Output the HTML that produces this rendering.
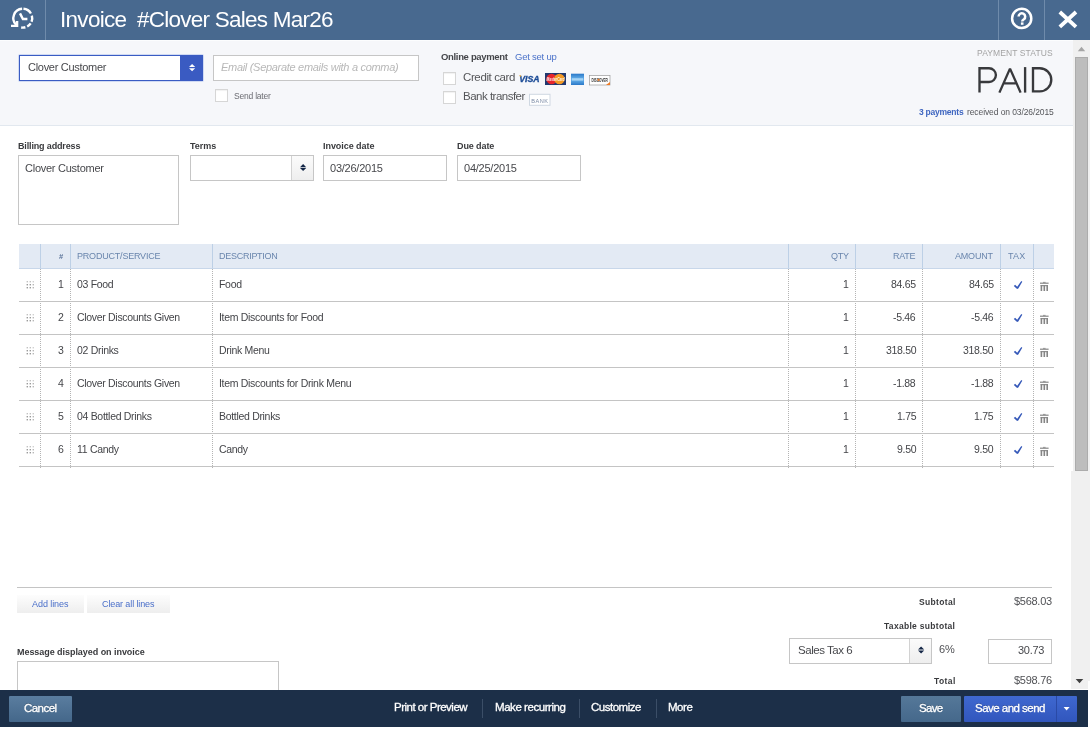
<!DOCTYPE html>
<html><head><meta charset="utf-8">
<style>
*{box-sizing:border-box;margin:0;padding:0}
html,body{width:1090px;height:746px;overflow:hidden;background:#fff;font-family:"Liberation Sans",sans-serif;color:#393a3d}
.a{position:absolute}
.tx{position:absolute;white-space:nowrap;will-change:transform}
.bx{position:absolute;background:#fff;border:1px solid #c6c6c6}
.cb{position:absolute;width:13px;height:13px;background:#fff;border:1px solid #d6d6d6;box-shadow:inset 0 1px 1px rgba(0,0,0,.06)}
.hs{position:absolute;top:244px;width:1px;height:24px;background:#bdd0e6}
.ds{position:absolute;top:269px;width:1px;height:200px;background:repeating-linear-gradient(to bottom,#b4b4b4 0,#b4b4b4 1px,transparent 1px,transparent 2px)}
.rb{position:absolute;left:19px;width:1035px;height:1px;background:#c4c4c4}
.btn{position:absolute;border-radius:1px}
.bsep{position:absolute;top:699px;width:1px;height:19px;background:#3b4e67}
</style></head><body>
<!-- header -->
<div class="a" style="left:0;top:0;width:1090px;height:40px;background:#48698f"></div>
<div class="a" style="left:45px;top:0;width:1px;height:40px;background:#6f8bab"></div>
<div class="a" style="left:998px;top:0;width:1px;height:40px;background:#6f8bab"></div>
<div class="a" style="left:1044px;top:0;width:1px;height:40px;background:#6f8bab"></div>
<svg class="a" style="left:0;top:0" width="1090" height="40">
  <g fill="none" stroke="#fff" stroke-width="2.4">
    <path d="M16.15 24.85A9.4 9.4 0 0 1 22.14 8.82"/>
    <path d="M23.46 8.82A9.4 9.4 0 0 1 30.94 13.50"/>
    <path d="M31.84 15.61A9.4 9.4 0 0 1 31.52 21.72"/>
    <path d="M30.68 23.32A9.4 9.4 0 0 1 27.21 26.50"/>
    <path d="M25.39 27.24A9.4 9.4 0 0 1 21.17 27.46"/>
    <path d="M11 25.9H17.1V20.9"/>
    <path d="M20 13.4L22.9 19H27.4"/>
    <circle cx="1021.7" cy="18.4" r="9.6" stroke-width="2.5"/>
  </g>
  <path d="M1059.8 12L1076 26.8M1076 12L1059.8 26.8" stroke="#fff" stroke-width="3.8" fill="none"/>
  <path d="M1018.6 16.6A3.3 3.3 0 1 1 1023.9 19.2C1022.6 20 1022.2 20.4 1022.2 21.6" fill="none" stroke="#fff" stroke-width="2.5"/><rect x="1020.9" y="22.4" width="2.6" height="2.4" fill="#fff"/>
</svg>

<!-- top section -->
<div class="a" style="left:0;top:40px;width:1073px;height:85px;background:#f6f7fa;border-top:1px solid #fcfdfe"></div>
<div class="a" style="left:0;top:125px;width:1073px;height:1px;background:#e2e8ef"></div>

<!-- customer select -->
<div class="a" style="left:18px;top:54px;width:186px;height:28px;border-radius:2px;background:#d0daf3"></div>
<div class="a" style="left:19px;top:55px;width:184px;height:26px;background:#fff;border:1px solid #3a5cc3"></div>
<div class="a" style="left:180px;top:55px;width:23px;height:26px;background:#3a5bc2"></div>
<svg class="a" style="left:180px;top:55px" width="23" height="26"><path d="M9 11.9L12.1 8.9L15.2 11.9ZM9 13.3L12.1 16.2L15.2 13.3Z" fill="#fff"/></svg>

<div class="bx" style="left:213px;top:55px;width:206px;height:26px"></div>
<div class="cb" style="left:215px;top:89px"></div>

<div class="cb" style="left:443px;top:72px"></div>
<div class="cb" style="left:443px;top:91px"></div>

<!-- card logos -->
<svg class="a" style="left:515px;top:70px;will-change:transform" width="100" height="40">
  <defs><linearGradient id="amx" x1="0" y1="0" x2="0" y2="1"><stop offset="0" stop-color="#2a78c8"/><stop offset=".5" stop-color="#6bb6ee"/><stop offset="1" stop-color="#2a78c8"/></linearGradient></defs>
  <text x="4.2" y="11.8" font-family="Liberation Sans" font-weight="bold" font-style="italic" font-size="9.5" fill="#1b4b96" stroke="#1b4b96" stroke-width=".35" textLength="20.5" lengthAdjust="spacingAndGlyphs">VISA</text>
  <path d="M4 5.2L6.2 5.6L5.6 7Z" fill="#f2a51c"/>
  <rect x="30" y="3" width="21" height="12" fill="#21386f"/>
  <circle cx="36.6" cy="9" r="5.3" fill="#e6252c"/>
  <circle cx="44.4" cy="9" r="5.3" fill="#f39a24"/>
  <text x="31.6" y="10.6" font-family="Liberation Sans" font-weight="bold" font-style="italic" font-size="4.6" fill="#fff" textLength="18" lengthAdjust="spacingAndGlyphs" opacity=".9">MasterCard</text>
  <rect x="56" y="3.7" width="13" height="11.3" fill="url(#amx)"/>
  <rect x="57" y="8.2" width="11" height="2.4" fill="#d8eefc" opacity=".55"/>
  <rect x="74.5" y="5.5" width="20.5" height="9.5" fill="#fff" stroke="#9a9a9a" stroke-width=".7"/>
  <text x="76.4" y="11.6" font-family="Liberation Sans" font-weight="bold" font-size="4.6" fill="#333" textLength="16.5" lengthAdjust="spacingAndGlyphs">DISCOVER</text>
  <circle cx="83.6" cy="9.9" r="1.1" fill="#f07a22"/>
    <path d="M95 12L95 15L91 15Z" fill="#f07a22"/>
  <rect x="14.5" y="24.3" width="20.5" height="11" fill="#fff" stroke="#cfd8e2" stroke-width="1"/>
  <text x="24.8" y="33" font-family="Liberation Sans" font-size="5.6" fill="#7d8ca6" text-anchor="middle" letter-spacing=".5">BANK</text>
</svg>

<!-- PAID -->
<svg class="a" style="left:960px;top:60px" width="100" height="40">
  <g fill="none" stroke="#38393c" stroke-width="2.35" stroke-linejoin="miter">
    <path d="M19.5 32.6V8.2H29A6.9 6.9 0 0 1 29 22H19.5"/>
    <path d="M39.4 32.6L50 8.6L60.6 32.6M43.6 23.4H56.4" stroke-linejoin="bevel"/>
    <path d="M65.1 7.1V32.6"/>
    <path d="M73 32.6V8.2H79.7A11.6 11.6 0 0 1 79.7 31.4H73"/>
  </g>
</svg>
<!-- scrollbar -->
<div class="a" style="left:1073px;top:40px;width:17px;height:641px;background:#f0f0f0"></div>
<div class="a" style="left:1071px;top:471px;width:17px;height:218px;background:#f0f0f0"></div>
<svg class="a" style="left:1070px;top:40px" width="20" height="650">
  <path d="M7.8 11.2L11.5 6.8L15.2 11.2Z" fill="#a5a5a5"/>
  <path d="M5.7 639L9.5 643.3L13.3 639Z" fill="#404040"/>
</svg>
<div class="a" style="left:1075px;top:57px;width:13px;height:414px;background:#bdbdbd;border:1px solid #acacac"></div>

<!-- billing -->
<div class="bx" style="left:18px;top:155px;width:161px;height:70px"></div>
<div class="bx" style="left:190px;top:155px;width:124px;height:26px"></div>
<div class="a" style="left:291px;top:156px;width:22px;height:24px;background:linear-gradient(#fbfbfb,#eeeeee);border-left:1px solid #d2d2d2"></div>
<svg class="a" style="left:291px;top:155px" width="23" height="26"><path d="M9 12.2L12.1 9L15.2 12.2ZM9 13L12.1 15.9L15.2 13Z" fill="#132646"/></svg>
<div class="bx" style="left:323px;top:155px;width:124px;height:26px"></div>
<div class="bx" style="left:457px;top:155px;width:124px;height:26px"></div>

<!-- table -->
<div class="a" style="left:19px;top:244px;width:1035px;height:25px;background:#e3eaf4;border-bottom:1px solid #c8d7ea"></div>
<div class="hs" style="left:40px"></div>
<div class="hs" style="left:70px"></div>
<div class="hs" style="left:212px"></div>
<div class="hs" style="left:788px"></div>
<div class="hs" style="left:855px"></div>
<div class="hs" style="left:922px"></div>
<div class="hs" style="left:1000px"></div>
<div class="hs" style="left:1033px"></div>
<div class="ds" style="left:40px"></div>
<div class="ds" style="left:70px"></div>
<div class="ds" style="left:212px"></div>
<div class="ds" style="left:788px"></div>
<div class="ds" style="left:855px"></div>
<div class="ds" style="left:922px"></div>
<div class="ds" style="left:1000px"></div>
<div class="ds" style="left:1033px"></div>
<div class="rb" style="top:301px"></div>
<div class="rb" style="top:334px"></div>
<div class="rb" style="top:367px"></div>
<div class="rb" style="top:400px"></div>
<div class="rb" style="top:433px"></div>
<div class="rb" style="top:466px"></div>
<svg class="a" style="left:0;top:268px" width="1073" height="200">
  <defs>
    <g id="dh" fill="#9a9a9a">
      <rect x="26.6" y="0" width="1.4" height="1.4" opacity=".6"/><rect x="29.6" y="0" width="1.4" height="1.4" opacity=".6"/><rect x="32.6" y="0" width="1.4" height="1.4" opacity=".45"/>
      <rect x="26.6" y="3" width="1.4" height="1.4"/><rect x="29.6" y="3" width="1.4" height="1.4"/><rect x="32.6" y="3" width="1.4" height="1.4" opacity=".7"/>
      <rect x="26.6" y="6" width="1.4" height="1.4"/><rect x="29.6" y="6" width="1.4" height="1.4"/><rect x="32.6" y="6" width="1.4" height="1.4" opacity=".7"/>
    </g>
    <path id="ck" d="M1013.8 286.1L1015.1 284.8L1017.2 286.8L1021.3 280.9L1022.3 281.7L1018.3 288.5L1017.1 289.1Z" fill="#3659b9"/>
    <g id="tr" fill="#858585">
      <rect x="1040" y="282.6" width="8.6" height="1.2"/>
      <rect x="1043" y="281.9" width="2.6" height="0.8"/>
      <rect x="1040.6" y="285.1" width="1.6" height="5.9"/>
      <rect x="1043.5" y="285.1" width="1.6" height="5.9"/>
      <rect x="1046.4" y="285.1" width="1.6" height="5.9"/>
      <rect x="1040.6" y="285.1" width="7.4" height="1.1"/>
    </g>
  </defs>
  <use href="#dh" y="13"/><use href="#ck" y="0" transform="translate(0,-268)"/><use href="#tr" transform="translate(0,-268)"/>
  <use href="#dh" y="46"/><use href="#ck" transform="translate(0,-235)"/><use href="#tr" transform="translate(0,-235)"/>
  <use href="#dh" y="79"/><use href="#ck" transform="translate(0,-202)"/><use href="#tr" transform="translate(0,-202)"/>
  <use href="#dh" y="112"/><use href="#ck" transform="translate(0,-169)"/><use href="#tr" transform="translate(0,-169)"/>
  <use href="#dh" y="145"/><use href="#ck" transform="translate(0,-136)"/><use href="#tr" transform="translate(0,-136)"/>
  <use href="#dh" y="178"/><use href="#ck" transform="translate(0,-103)"/><use href="#tr" transform="translate(0,-103)"/>
</svg>

<!-- bottom of table -->
<div class="a" style="left:17px;top:587px;width:1035px;height:1px;background:#c4c4c4"></div>
<div class="btn" style="left:17px;top:595px;width:67px;height:18px;background:linear-gradient(#fdfdfd,#eeeeee);border-radius:0"></div>
<div class="btn" style="left:87px;top:595px;width:83px;height:18px;background:linear-gradient(#fdfdfd,#eeeeee);border-radius:0"></div>

<div class="bx" style="left:789px;top:638px;width:143px;height:26px"></div>
<div class="a" style="left:909px;top:639px;width:22px;height:24px;background:linear-gradient(#fbfbfb,#eeeeee);border-left:1px solid #d2d2d2"></div>
<svg class="a" style="left:910px;top:638px" width="22" height="25"><path d="M8 11.6L11.1 8.5L14.2 11.6ZM8 12.5L11.1 15.5L14.2 12.5Z" fill="#132646"/></svg>
<div class="bx" style="left:988px;top:639px;width:64px;height:25px"></div>

<div class="bx" style="left:17px;top:661px;width:262px;height:40px"></div>

<!-- bottom bar -->
<div class="a" style="left:0;top:690px;width:1088px;height:37px;background:#1c2f48"></div>
<div class="btn" style="left:9px;top:696px;width:63px;height:26px;background:linear-gradient(#5a7d9f,#44678a)"></div>
<div class="bsep" style="left:482px"></div>
<div class="bsep" style="left:579px"></div>
<div class="bsep" style="left:656px"></div>
<div class="btn" style="left:901px;top:696px;width:60px;height:26px;background:linear-gradient(#557899,#45688b)"></div>
<div class="btn" style="left:964px;top:696px;width:113px;height:26px;background:linear-gradient(#3f68d0,#3156bd)"></div>
<div class="a" style="left:1056px;top:696px;width:1px;height:26px;background:#2a4aa6"></div>
<svg class="a" style="left:1056px;top:696px" width="21" height="26"><path d="M7.6 11L10.6 14.6L13.6 11Z" fill="#fff"/></svg>

<div class="tx" style="left:59.70px;top:8.55px;font-size:22.5px;line-height:22.5px;color:#fff;font-weight:normal;font-style:normal;letter-spacing:-0.696px;">Invoice</div>
<div class="tx" style="left:136.70px;top:8.55px;font-size:22.5px;line-height:22.5px;color:#fff;font-weight:normal;font-style:normal;letter-spacing:-0.754px;">#Clover Sales Mar26</div>
<div class="tx" style="left:27.60px;top:62.49px;font-size:11px;line-height:11px;color:#47484c;font-weight:normal;font-style:normal;letter-spacing:-0.290px;">Clover Customer</div>
<div class="tx" style="left:221.00px;top:62.49px;font-size:11px;line-height:11px;color:#b8b8b8;font-weight:normal;font-style:italic;letter-spacing:-0.303px;">Email (Separate emails with a comma)</div>
<div class="tx" style="left:234.00px;top:91.50px;font-size:8.5px;line-height:8.5px;color:#6b6c72;font-weight:normal;font-style:normal;letter-spacing:-0.213px;">Send later</div>
<div class="tx" style="left:441.30px;top:52.26px;font-size:9.5px;line-height:9.5px;color:#45464a;font-weight:bold;font-style:normal;letter-spacing:-0.331px;">Online payment</div>
<div class="tx" style="left:514.90px;top:52.26px;font-size:9.5px;line-height:9.5px;color:#4b72c9;font-weight:normal;font-style:normal;letter-spacing:-0.227px;">Get set up</div>
<div class="tx" style="left:463.00px;top:72.06px;font-size:11.5px;line-height:11.5px;color:#555659;font-weight:normal;font-style:normal;letter-spacing:-0.385px;">Credit card</div>
<div class="tx" style="left:463.00px;top:91.06px;font-size:11.5px;line-height:11.5px;color:#555659;font-weight:normal;font-style:normal;letter-spacing:-0.505px;">Bank transfer</div>
<div class="tx" style="left:977.20px;top:49.20px;font-size:8.5px;line-height:8.5px;color:#a3a3a3;font-weight:normal;font-style:normal;letter-spacing:0.101px;">PAYMENT STATUS</div>
<div class="tx" style="left:918.50px;top:108.20px;font-size:8.5px;line-height:8.5px;color:#3f66c0;font-weight:bold;font-style:normal;letter-spacing:-0.238px;">3 payments</div>
<div class="tx" style="left:967.30px;top:108.20px;font-size:8.5px;line-height:8.5px;color:#55565a;font-weight:normal;font-style:normal;letter-spacing:-0.096px;">received on 03/26/2015</div>
<div class="tx" style="left:18.00px;top:142.18px;font-size:9px;line-height:9px;color:#393a3d;font-weight:bold;font-style:normal;letter-spacing:-0.151px;">Billing address</div>
<div class="tx" style="left:25.20px;top:163.19px;font-size:11px;line-height:11px;color:#47484c;font-weight:normal;font-style:normal;letter-spacing:-0.254px;">Clover Customer</div>
<div class="tx" style="left:189.90px;top:142.48px;font-size:9px;line-height:9px;color:#393a3d;font-weight:bold;font-style:normal;letter-spacing:-0.035px;">Terms</div>
<div class="tx" style="left:322.90px;top:142.48px;font-size:9px;line-height:9px;color:#393a3d;font-weight:bold;font-style:normal;letter-spacing:-0.056px;">Invoice date</div>
<div class="tx" style="left:457.10px;top:142.48px;font-size:9px;line-height:9px;color:#393a3d;font-weight:bold;font-style:normal;letter-spacing:-0.100px;">Due date</div>
<div class="tx" style="left:330.00px;top:163.19px;font-size:11px;line-height:11px;color:#47484c;font-weight:normal;font-style:normal;letter-spacing:-0.237px;">03/26/2015</div>
<div class="tx" style="left:464.40px;top:163.19px;font-size:11px;line-height:11px;color:#47484c;font-weight:normal;font-style:normal;letter-spacing:-0.237px;">04/25/2015</div>
<div class="tx" style="left:58.60px;top:253.05px;font-size:7.5px;line-height:7.5px;color:#5a7399;font-weight:bold;font-style:normal;letter-spacing:0.000px;">#</div>
<div class="tx" style="left:76.80px;top:252.48px;font-size:9px;line-height:9px;color:#6a86ad;font-weight:normal;font-style:normal;letter-spacing:-0.203px;">PRODUCT/SERVICE</div>
<div class="tx" style="left:218.80px;top:252.48px;font-size:9px;line-height:9px;color:#6a86ad;font-weight:normal;font-style:normal;letter-spacing:-0.271px;">DESCRIPTION</div>
<div class="tx" style="left:830.80px;top:252.48px;font-size:9px;line-height:9px;color:#6a86ad;font-weight:normal;font-style:normal;letter-spacing:-0.249px;">QTY</div>
<div class="tx" style="left:893.00px;top:252.48px;font-size:9px;line-height:9px;color:#6a86ad;font-weight:normal;font-style:normal;letter-spacing:-0.244px;">RATE</div>
<div class="tx" style="left:955.20px;top:252.48px;font-size:9px;line-height:9px;color:#6a86ad;font-weight:normal;font-style:normal;letter-spacing:-0.200px;">AMOUNT</div>
<div class="tx" style="left:1008.10px;top:252.48px;font-size:9px;line-height:9px;color:#6a86ad;font-weight:normal;font-style:normal;letter-spacing:0.184px;">TAX</div>
<div class="tx" style="left:58.10px;top:278.81px;font-size:10.5px;line-height:10.5px;color:#444549;font-weight:normal;font-style:normal;letter-spacing:-0.310px;">1</div>
<div class="tx" style="left:76.80px;top:278.81px;font-size:10.5px;line-height:10.5px;color:#444549;font-weight:normal;font-style:normal;letter-spacing:-0.310px;">03 Food</div>
<div class="tx" style="left:219.00px;top:278.81px;font-size:10.5px;line-height:10.5px;color:#444549;font-weight:normal;font-style:normal;letter-spacing:-0.310px;">Food</div>
<div class="tx" style="left:842.50px;top:278.81px;font-size:10.5px;line-height:10.5px;color:#444549;font-weight:normal;font-style:normal;letter-spacing:-0.310px;">1</div>
<div class="tx" style="left:891.10px;top:278.81px;font-size:10.5px;line-height:10.5px;color:#444549;font-weight:normal;font-style:normal;letter-spacing:-0.310px;">84.65</div>
<div class="tx" style="left:968.70px;top:278.81px;font-size:10.5px;line-height:10.5px;color:#444549;font-weight:normal;font-style:normal;letter-spacing:-0.310px;">84.65</div>
<div class="tx" style="left:58.10px;top:311.81px;font-size:10.5px;line-height:10.5px;color:#444549;font-weight:normal;font-style:normal;letter-spacing:-0.310px;">2</div>
<div class="tx" style="left:76.80px;top:311.81px;font-size:10.5px;line-height:10.5px;color:#444549;font-weight:normal;font-style:normal;letter-spacing:-0.310px;">Clover Discounts Given</div>
<div class="tx" style="left:219.00px;top:311.81px;font-size:10.5px;line-height:10.5px;color:#444549;font-weight:normal;font-style:normal;letter-spacing:-0.310px;">Item Discounts for Food</div>
<div class="tx" style="left:842.50px;top:311.81px;font-size:10.5px;line-height:10.5px;color:#444549;font-weight:normal;font-style:normal;letter-spacing:-0.310px;">1</div>
<div class="tx" style="left:893.45px;top:311.81px;font-size:10.5px;line-height:10.5px;color:#444549;font-weight:normal;font-style:normal;letter-spacing:-0.310px;">-5.46</div>
<div class="tx" style="left:971.05px;top:311.81px;font-size:10.5px;line-height:10.5px;color:#444549;font-weight:normal;font-style:normal;letter-spacing:-0.310px;">-5.46</div>
<div class="tx" style="left:58.10px;top:344.81px;font-size:10.5px;line-height:10.5px;color:#444549;font-weight:normal;font-style:normal;letter-spacing:-0.310px;">3</div>
<div class="tx" style="left:76.80px;top:344.81px;font-size:10.5px;line-height:10.5px;color:#444549;font-weight:normal;font-style:normal;letter-spacing:-0.310px;">02 Drinks</div>
<div class="tx" style="left:219.00px;top:344.81px;font-size:10.5px;line-height:10.5px;color:#444549;font-weight:normal;font-style:normal;letter-spacing:-0.310px;">Drink Menu</div>
<div class="tx" style="left:842.50px;top:344.81px;font-size:10.5px;line-height:10.5px;color:#444549;font-weight:normal;font-style:normal;letter-spacing:-0.310px;">1</div>
<div class="tx" style="left:885.57px;top:344.81px;font-size:10.5px;line-height:10.5px;color:#444549;font-weight:normal;font-style:normal;letter-spacing:-0.310px;">318.50</div>
<div class="tx" style="left:963.17px;top:344.81px;font-size:10.5px;line-height:10.5px;color:#444549;font-weight:normal;font-style:normal;letter-spacing:-0.310px;">318.50</div>
<div class="tx" style="left:58.10px;top:377.81px;font-size:10.5px;line-height:10.5px;color:#444549;font-weight:normal;font-style:normal;letter-spacing:-0.310px;">4</div>
<div class="tx" style="left:76.80px;top:377.81px;font-size:10.5px;line-height:10.5px;color:#444549;font-weight:normal;font-style:normal;letter-spacing:-0.310px;">Clover Discounts Given</div>
<div class="tx" style="left:219.00px;top:377.81px;font-size:10.5px;line-height:10.5px;color:#444549;font-weight:normal;font-style:normal;letter-spacing:-0.310px;">Item Discounts for Drink Menu</div>
<div class="tx" style="left:842.50px;top:377.81px;font-size:10.5px;line-height:10.5px;color:#444549;font-weight:normal;font-style:normal;letter-spacing:-0.310px;">1</div>
<div class="tx" style="left:893.45px;top:377.81px;font-size:10.5px;line-height:10.5px;color:#444549;font-weight:normal;font-style:normal;letter-spacing:-0.310px;">-1.88</div>
<div class="tx" style="left:971.05px;top:377.81px;font-size:10.5px;line-height:10.5px;color:#444549;font-weight:normal;font-style:normal;letter-spacing:-0.310px;">-1.88</div>
<div class="tx" style="left:58.10px;top:410.81px;font-size:10.5px;line-height:10.5px;color:#444549;font-weight:normal;font-style:normal;letter-spacing:-0.310px;">5</div>
<div class="tx" style="left:76.80px;top:410.81px;font-size:10.5px;line-height:10.5px;color:#444549;font-weight:normal;font-style:normal;letter-spacing:-0.310px;">04 Bottled Drinks</div>
<div class="tx" style="left:219.00px;top:410.81px;font-size:10.5px;line-height:10.5px;color:#444549;font-weight:normal;font-style:normal;letter-spacing:-0.310px;">Bottled Drinks</div>
<div class="tx" style="left:842.50px;top:410.81px;font-size:10.5px;line-height:10.5px;color:#444549;font-weight:normal;font-style:normal;letter-spacing:-0.310px;">1</div>
<div class="tx" style="left:896.63px;top:410.81px;font-size:10.5px;line-height:10.5px;color:#444549;font-weight:normal;font-style:normal;letter-spacing:-0.310px;">1.75</div>
<div class="tx" style="left:974.23px;top:410.81px;font-size:10.5px;line-height:10.5px;color:#444549;font-weight:normal;font-style:normal;letter-spacing:-0.310px;">1.75</div>
<div class="tx" style="left:58.10px;top:443.81px;font-size:10.5px;line-height:10.5px;color:#444549;font-weight:normal;font-style:normal;letter-spacing:-0.310px;">6</div>
<div class="tx" style="left:76.80px;top:443.81px;font-size:10.5px;line-height:10.5px;color:#444549;font-weight:normal;font-style:normal;letter-spacing:-0.310px;">11 Candy</div>
<div class="tx" style="left:219.00px;top:443.81px;font-size:10.5px;line-height:10.5px;color:#444549;font-weight:normal;font-style:normal;letter-spacing:-0.310px;">Candy</div>
<div class="tx" style="left:842.50px;top:443.81px;font-size:10.5px;line-height:10.5px;color:#444549;font-weight:normal;font-style:normal;letter-spacing:-0.310px;">1</div>
<div class="tx" style="left:896.63px;top:443.81px;font-size:10.5px;line-height:10.5px;color:#444549;font-weight:normal;font-style:normal;letter-spacing:-0.310px;">9.50</div>
<div class="tx" style="left:974.23px;top:443.81px;font-size:10.5px;line-height:10.5px;color:#444549;font-weight:normal;font-style:normal;letter-spacing:-0.310px;">9.50</div>
<div class="tx" style="left:31.80px;top:600.08px;font-size:9px;line-height:9px;color:#4a6fc9;font-weight:normal;font-style:normal;letter-spacing:-0.065px;">Add lines</div>
<div class="tx" style="left:102.00px;top:600.08px;font-size:9px;line-height:9px;color:#4a6fc9;font-weight:normal;font-style:normal;letter-spacing:-0.109px;">Clear all lines</div>
<div class="tx" style="left:918.70px;top:597.90px;font-size:8.5px;line-height:8.5px;color:#393a3d;font-weight:bold;font-style:normal;letter-spacing:0.338px;">Subtotal</div>
<div class="tx" style="left:1013.80px;top:595.79px;font-size:11px;line-height:11px;color:#505155;font-weight:normal;font-style:normal;letter-spacing:-0.274px;">$568.03</div>
<div class="tx" style="left:884.10px;top:622.10px;font-size:8.5px;line-height:8.5px;color:#393a3d;font-weight:bold;font-style:normal;letter-spacing:0.301px;">Taxable subtotal</div>
<div class="tx" style="left:798.00px;top:645.46px;font-size:11.5px;line-height:11.5px;color:#47484c;font-weight:normal;font-style:normal;letter-spacing:-0.465px;">Sales Tax 6</div>
<div class="tx" style="left:938.70px;top:644.49px;font-size:11px;line-height:11px;color:#505155;font-weight:normal;font-style:normal;letter-spacing:-0.118px;">6%</div>
<div class="tx" style="left:1018.40px;top:645.49px;font-size:11px;line-height:11px;color:#47484c;font-weight:normal;font-style:normal;letter-spacing:-0.302px;">30.73</div>
<div class="tx" style="left:933.70px;top:676.90px;font-size:8.5px;line-height:8.5px;color:#393a3d;font-weight:bold;font-style:normal;letter-spacing:0.422px;">Total</div>
<div class="tx" style="left:1013.80px;top:675.49px;font-size:11px;line-height:11px;color:#505155;font-weight:normal;font-style:normal;letter-spacing:-0.274px;">$598.76</div>
<div class="tx" style="left:17.20px;top:648.08px;font-size:9px;line-height:9px;color:#393a3d;font-weight:bold;font-style:normal;letter-spacing:-0.050px;">Message displayed on invoice</div>
<div class="tx" style="left:24.00px;top:703.06px;font-size:11.5px;line-height:11.5px;color:#fff;font-weight:normal;font-style:normal;letter-spacing:-0.548px;-webkit-text-stroke:0.3px #fff;text-shadow:0 -1px 0 rgba(0,0,0,.25);">Cancel</div>
<div class="tx" style="left:393.80px;top:701.56px;font-size:11.5px;line-height:11.5px;color:#fff;font-weight:normal;font-style:normal;letter-spacing:-0.504px;-webkit-text-stroke:0.3px #fff;">Print or Preview</div>
<div class="tx" style="left:494.50px;top:701.56px;font-size:11.5px;line-height:11.5px;color:#fff;font-weight:normal;font-style:normal;letter-spacing:-0.446px;-webkit-text-stroke:0.3px #fff;">Make recurring</div>
<div class="tx" style="left:591.40px;top:701.56px;font-size:11.5px;line-height:11.5px;color:#fff;font-weight:normal;font-style:normal;letter-spacing:-0.491px;-webkit-text-stroke:0.3px #fff;">Customize</div>
<div class="tx" style="left:667.70px;top:701.56px;font-size:11.5px;line-height:11.5px;color:#fff;font-weight:normal;font-style:normal;letter-spacing:-0.468px;-webkit-text-stroke:0.3px #fff;">More</div>
<div class="tx" style="left:919.00px;top:703.06px;font-size:11.5px;line-height:11.5px;color:#fff;font-weight:normal;font-style:normal;letter-spacing:-0.672px;-webkit-text-stroke:0.3px #fff;text-shadow:0 -1px 0 rgba(0,0,0,.25);">Save</div>
<div class="tx" style="left:975.00px;top:703.06px;font-size:11.5px;line-height:11.5px;color:#fff;font-weight:normal;font-style:normal;letter-spacing:-0.519px;-webkit-text-stroke:0.3px #fff;text-shadow:0 -1px 0 rgba(0,0,0,.25);">Save and send</div>
</body></html>
